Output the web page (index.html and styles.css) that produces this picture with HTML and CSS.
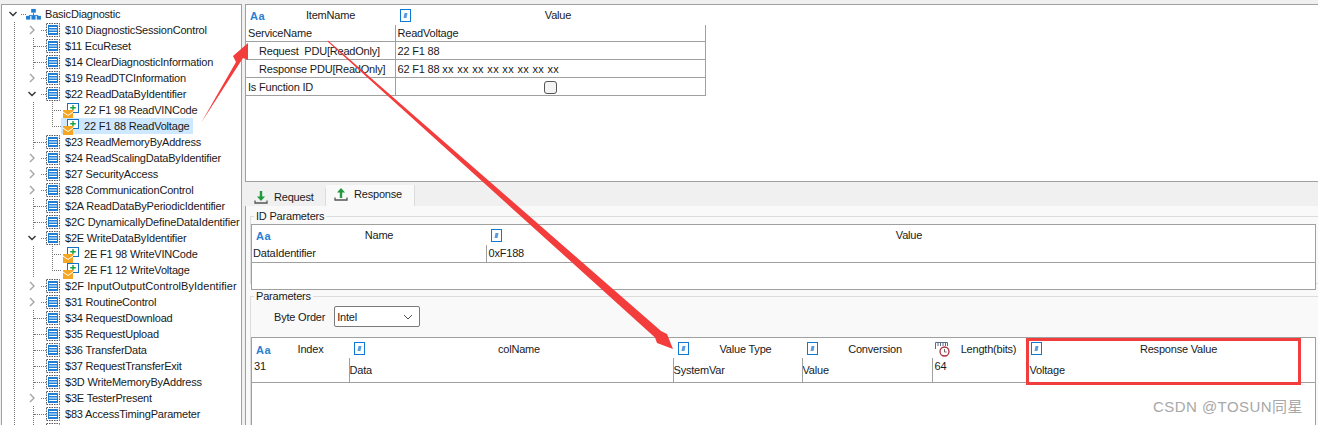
FILE: index.html
```html
<!DOCTYPE html>
<html>
<head>
<meta charset="utf-8">
<link rel="stylesheet" href="styles.css">
<title>BasicDiagnostic</title>
</head>
<body>
<svg width="0" height="0" class="defs">
  <defs>
    <symbol id="svc" viewBox="0 0 14 14">
      <rect x="0.5" y="0.5" width="13" height="13" fill="#fff" stroke="#555" stroke-dasharray="1.5 1"/>
      <rect x="2" y="2" width="10" height="10" fill="#1e7fd6"/>
      <path d="M3 4.500h8M3 7h8M3 9.500h8" stroke="#fff" stroke-width="1"/>
    </symbol>
    <symbol id="msg" viewBox="0 0 16 16">
      <rect x="4.500" y="0.500" width="11" height="9" fill="#fff" stroke="#1573c4"/>
      <path d="M10 2v5.500M7.200 4.700h5.600" stroke="#19a03c" stroke-width="1.400"/>
      <rect x="0" y="7" width="10" height="9" fill="#f5a623"/>
      <path d="M0 9l5 3.500L10 9" fill="none" stroke="#fff" stroke-width="1"/>
    </symbol>
    <symbol id="aa" viewBox="0 0 16 12">
      <text x="0" y="10.500" class="aa-text">Aa</text>
    </symbol>
    <symbol id="hash" viewBox="0 0 11 13">
      <rect x="0.500" y="0.500" width="10" height="12" fill="#fff" stroke="#0f78d4"/>
      <path d="M4.500 4h3l-1 5h-3z" fill="#5a9be0"/>
    </symbol>
    <symbol id="len" viewBox="0 0 16 16">
      <path d="M0.500 8V1.500h12V5" fill="none" stroke="#5b6b88"/>
      <path d="M3 2v3M5.500 2v3M8 2v3M10.500 2v3" stroke="#5b6b88"/>
      <circle cx="9.500" cy="10.500" r="4.500" fill="#fff" stroke="#a8323c" stroke-width="1.300"/>
      <path d="M9.500 8v3h2" fill="none" stroke="#666"/>
    </symbol>
    <symbol id="open" viewBox="0 0 10 10"><path d="M1.500 3l3.500 3.500L8.500 3" fill="none" stroke="#333" stroke-width="1.400"/></symbol>
    <symbol id="closed" viewBox="0 0 10 10"><path d="M3 1L7 5 3 9" fill="none" stroke="#a6a6a6" stroke-width="1.400"/></symbol>
  </defs>
</svg>
<div class="app">
  <aside class="tree">
    <div class="row root"><svg class="tw"><use href="#open"/></svg><span class="dots"></span>
      <svg class="ic-root" viewBox="0 0 16 14"><rect x="5.500" y="1" width="5" height="4" fill="#1e7fd6"/><path d="M8 5v3M3 8h10" stroke="#1e7fd6"/><rect x="0" y="8.500" width="4.500" height="4" fill="#1e7fd6"/><rect x="5.750" y="8.500" width="4.500" height="4" fill="#1e7fd6"/><rect x="11.500" y="8.500" width="4.500" height="4" fill="#1e7fd6"/></svg>
      <span class="lbl">BasicDiagnostic</span></div>
    <div class="row l1"><svg class="tw"><use href="#closed"/></svg><span class="dots"></span><svg class="ic"><use href="#svc"/></svg><span class="lbl">$10 DiagnosticSessionControl</span></div>
    <div class="row l1"><span class="tw none"></span><span class="dots"></span><svg class="ic"><use href="#svc"/></svg><span class="lbl">$11 EcuReset</span></div>
    <div class="row l1"><span class="tw none"></span><span class="dots"></span><svg class="ic"><use href="#svc"/></svg><span class="lbl">$14 ClearDiagnosticInformation</span></div>
    <div class="row l1"><svg class="tw"><use href="#closed"/></svg><span class="dots"></span><svg class="ic"><use href="#svc"/></svg><span class="lbl">$19 ReadDTCInformation</span></div>
    <div class="row l1"><svg class="tw"><use href="#open"/></svg><span class="dots"></span><svg class="ic"><use href="#svc"/></svg><span class="lbl">$22 ReadDataByIdentifier</span></div>
    <div class="row l2"><div class="item"><svg class="ic2"><use href="#msg"/></svg><span class="lbl">22 F1 98 ReadVINCode</span></div></div>
    <div class="row l2 last"><div class="item sel"><svg class="ic2"><use href="#msg"/></svg><span class="lbl">22 F1 88 ReadVoltage</span></div></div>
    <div class="row l1"><span class="tw none"></span><span class="dots"></span><svg class="ic"><use href="#svc"/></svg><span class="lbl">$23 ReadMemoryByAddress</span></div>
    <div class="row l1"><svg class="tw"><use href="#closed"/></svg><span class="dots"></span><svg class="ic"><use href="#svc"/></svg><span class="lbl">$24 ReadScalingDataByIdentifier</span></div>
    <div class="row l1"><svg class="tw"><use href="#closed"/></svg><span class="dots"></span><svg class="ic"><use href="#svc"/></svg><span class="lbl">$27 SecurityAccess</span></div>
    <div class="row l1"><svg class="tw"><use href="#closed"/></svg><span class="dots"></span><svg class="ic"><use href="#svc"/></svg><span class="lbl">$28 CommunicationControl</span></div>
    <div class="row l1"><span class="tw none"></span><span class="dots"></span><svg class="ic"><use href="#svc"/></svg><span class="lbl">$2A ReadDataByPeriodicIdentifier</span></div>
    <div class="row l1"><span class="tw none"></span><span class="dots"></span><svg class="ic"><use href="#svc"/></svg><span class="lbl mid">$2C DynamicallyDefineDataIdentifier</span></div>
    <div class="row l1"><svg class="tw"><use href="#open"/></svg><span class="dots"></span><svg class="ic"><use href="#svc"/></svg><span class="lbl">$2E WriteDataByIdentifier</span></div>
    <div class="row l2"><div class="item"><svg class="ic2"><use href="#msg"/></svg><span class="lbl">2E F1 98 WriteVINCode</span></div></div>
    <div class="row l2 last"><div class="item"><svg class="ic2"><use href="#msg"/></svg><span class="lbl">2E F1 12 WriteVoltage</span></div></div>
    <div class="row l1"><svg class="tw"><use href="#closed"/></svg><span class="dots"></span><svg class="ic"><use href="#svc"/></svg><span class="lbl wide">$2F InputOutputControlByIdentifier</span></div>
    <div class="row l1"><svg class="tw"><use href="#closed"/></svg><span class="dots"></span><svg class="ic"><use href="#svc"/></svg><span class="lbl">$31 RoutineControl</span></div>
    <div class="row l1"><span class="tw none"></span><span class="dots"></span><svg class="ic"><use href="#svc"/></svg><span class="lbl">$34 RequestDownload</span></div>
    <div class="row l1"><span class="tw none"></span><span class="dots"></span><svg class="ic"><use href="#svc"/></svg><span class="lbl">$35 RequestUpload</span></div>
    <div class="row l1"><span class="tw none"></span><span class="dots"></span><svg class="ic"><use href="#svc"/></svg><span class="lbl">$36 TransferData</span></div>
    <div class="row l1"><span class="tw none"></span><span class="dots"></span><svg class="ic"><use href="#svc"/></svg><span class="lbl">$37 RequestTransferExit</span></div>
    <div class="row l1"><span class="tw none"></span><span class="dots"></span><svg class="ic"><use href="#svc"/></svg><span class="lbl">$3D WriteMemoryByAddress</span></div>
    <div class="row l1"><svg class="tw"><use href="#closed"/></svg><span class="dots"></span><svg class="ic"><use href="#svc"/></svg><span class="lbl">$3E TesterPresent</span></div>
    <div class="row l1"><span class="tw none"></span><span class="dots"></span><svg class="ic"><use href="#svc"/></svg><span class="lbl">$83 AccessTimingParameter</span></div>
    <div class="row l1"><span class="tw none"></span><span class="dots"></span><svg class="ic"><use href="#svc"/></svg></div>
  </aside>

  <main class="right">
    <section class="top-grid">
      <table class="grid g1">
        <colgroup><col class="c1a"><col class="c1b"></colgroup>
        <thead><tr><th><div class="hd"><svg class="i-aa"><use href="#aa"/></svg><span class="ttl">ItemName</span></div></th><th><div class="hd"><svg class="i-h"><use href="#hash"/></svg><span class="ttl">Value</span></div></th></tr></thead>
        <tbody>
          <tr><td>ServiceName</td><td>ReadVoltage</td></tr>
          <tr><td class="ind">Request&nbsp; PDU[ReadOnly]</td><td>22 F1 88</td></tr>
          <tr><td class="ind">Response PDU[ReadOnly]</td><td>62 F1 88 <span class="xx">xx xx xx xx xx xx xx xx</span></td></tr>
          <tr><td>Is Function ID</td><td class="chk"><span class="box"></span></td></tr>
        </tbody>
      </table>
    </section>

    <div class="tabs">
      <div class="tab"><svg class="i-tab" viewBox="0 0 14 14"><path d="M7 1v7" stroke="#1f9a3c" stroke-width="2.400"/><path d="M3 6.500h8L7 11z" fill="#1f9a3c"/><path d="M1 10.500v2.500h12v-2.500" fill="none" stroke="#555" stroke-width="1.300"/></svg>Request</div>
      <div class="tab active"><svg class="i-tab" viewBox="0 0 14 14"><path d="M7 11V4" stroke="#1f9a3c" stroke-width="2.400"/><path d="M3 5.500h8L7 1z" fill="#1f9a3c"/><path d="M1 10.500v2.500h12v-2.500" fill="none" stroke="#555" stroke-width="1.300"/></svg>Response</div>
    </div>

    <section class="pane">
      <fieldset class="grp id-grp">
        <legend>ID Parameters</legend>
        <div class="gridbox id-box">
          <table class="grid g2">
            <colgroup><col class="c2a"><col class="c2b"></colgroup>
            <thead><tr><th><div class="hd"><svg class="i-aa"><use href="#aa"/></svg><span class="ttl">Name</span></div></th><th><div class="hd"><svg class="i-h"><use href="#hash"/></svg><span class="ttl">Value</span></div></th></tr></thead>
            <tbody><tr><td>DataIdentifier</td><td class="val">0xF188</td></tr></tbody>
          </table>
        </div>
      </fieldset>
      <fieldset class="grp par-grp">
        <legend>Parameters</legend>
        <div class="order"><span>Byte Order</span><div class="select">Intel<svg class="chev" viewBox="0 0 10 6"><path d="M1 1l4 4 4-4" fill="none" stroke="#555"/></svg></div></div>
        <div class="gridbox par-box">
          <table class="grid g3">
            <colgroup><col class="c3a"><col class="c3b"><col class="c3c"><col class="c3d"><col class="c3e"><col class="c3f"></colgroup>
            <thead><tr>
              <th><div class="hd"><svg class="i-aa"><use href="#aa"/></svg><span class="ttl">Index</span></div></th>
              <th><div class="hd"><svg class="i-h"><use href="#hash"/></svg><span class="ttl">colName</span></div></th>
              <th><div class="hd"><svg class="i-h"><use href="#hash"/></svg><span class="ttl">Value Type</span></div></th>
              <th><div class="hd"><svg class="i-h"><use href="#hash"/></svg><span class="ttl">Conversion</span></div></th>
              <th><div class="hd"><svg class="i-len"><use href="#len"/></svg><span class="ttl">Length(bits)</span></div></th>
              <th><div class="hd"><svg class="i-h"><use href="#hash"/></svg><span class="ttl">Response Value</span></div></th>
            </tr></thead>
            <tbody><tr><td class="up">31</td><td class="tight">Data</td><td class="tight">SystemVar</td><td class="tight">Value</td><td class="up">64</td><td class="pad">Voltage</td></tr></tbody>
          </table>
        </div>
      </fieldset>
    </section>
  </main>
</div>

<svg class="overlay" width="1318" height="425" viewBox="0 0 1318 425">
  <rect x="1027.500" y="339.500" width="272" height="44" fill="none" stroke="#f33c3c" stroke-width="3"/>
  <path d="M201 123 L236 62 L233 56 L248 43 L248 60 L243 58 Z" fill="#f33c3c"/>
  <path d="M328 40.500 L661 331 L667 334 L673 349 L657 343 L655 337.500 L327.500 41.500 Z" fill="#f33c3c"/>
</svg>
<div class="mark">CSDN @TOSUN同星</div>
</body>
</html>
```
FILE: styles.css
```css
* { box-sizing: border-box; }
html, body { margin: 0; padding: 0; }
body {
  width: 1318px; height: 425px; overflow: hidden; position: relative;
  background: #f0f0f0;
  font: 11px/16px "Liberation Sans", "Noto Sans CJK SC", sans-serif;
  letter-spacing: -0.2px;
  color: #1a1a1a;
}
.defs { position: absolute; }
.aa-text { font: bold 11px "Liberation Sans", sans-serif; fill: #2a7fd4; letter-spacing: 0.5px; }

.app { display: flex; height: 425px; padding-top: 4px; }
.tree {
  width: 241px; margin-left: 1px; flex: none;
  background: repeating-linear-gradient(to bottom, #777 0 1px, transparent 1px 2px) 12px 17px / 1px 100% no-repeat #fff;
  border: 1px solid #a0a0a0; border-bottom: 0; padding-top: 1px; overflow: hidden;
}
.row {
  display: flex; align-items: center; height: 16px; white-space: nowrap;
  --vline: repeating-linear-gradient(to bottom, #777 0 1px, transparent 1px 2px);
  --hline: repeating-linear-gradient(to right, #777 0 1px, transparent 1px 2px);
}
.root { padding-left: 6px; }
.tw { width: 10px; height: 10px; flex: none; display: block; background: #fff; outline: 3px solid #fff; }
.tw.none { background: transparent; outline: 0; }
.root .tw { background: transparent; outline: 0; }
.dots { width: 5px; flex: none; border-top: 1px dotted #777; margin-left: 3px; }
.ic-root { width: 15px; height: 13px; margin-right: 2px; flex: none; }
.l1 {
  padding-left: 25px;
  background: var(--vline) 31px 0 / 1px 100% no-repeat;
}
.l1 .dots { margin-left: 4px; }
.l1 .tw.none + .dots { margin-left: -3px; width: 12px; }
.l1 .ic { width: 14px; height: 14px; margin-right: 3px; flex: none; }
.l2 {
  padding-left: 59px;
  background:
    var(--vline) 31px 0 / 1px 100% no-repeat,
    var(--vline) 50px 0 / 1px 100% no-repeat,
    var(--hline) 50px 8px / 10px 1px no-repeat;
}
.l2.last {
  background:
    var(--vline) 31px 0 / 1px 100% no-repeat,
    var(--vline) 50px 0 / 1px 9px no-repeat,
    var(--hline) 50px 8px / 10px 1px no-repeat;
}
.item { display: flex; align-items: flex-start; height: 16px; padding-left: 2px; padding-right: 2px; }
.sel { background: #cde8ff; }
.ic2 { width: 16px; height: 16px; margin-top: 1px; margin-right: 3px; flex: none; overflow: visible; }
.lbl { padding: 0 2px; height: 16px; line-height: 16px; }
.lbl.mid { letter-spacing: -0.15px; }
.lbl.wide { letter-spacing: 0.05px; }

.right { flex: 1; margin-left: 3px; min-width: 0; display: flex; flex-direction: column; }
.top-grid { height: 178px; background: #fff; border: 1px solid #a0a0a0; border-right: 0; flex: none; }

.grid { border-collapse: collapse; table-layout: fixed; background: #fff; }
.grid th { font-weight: normal; padding: 0; text-align: center; height: 20px; }
.grid td { padding: 0 1px 0 1px; border-right: 1px solid #a0a0a0; border-bottom: 1px solid #a0a0a0; height: 18px; white-space: nowrap; overflow: hidden; }
.hd { display: flex; align-items: center; height: 20px; }
.ttl { flex: 1; text-align: center; }
.i-aa { width: 16px; height: 12px; margin-left: 4px; flex: none; }
.i-h { width: 11px; height: 13px; margin-left: 5px; flex: none; }
.i-len { width: 16px; height: 16px; margin-left: 3px; flex: none; }

.g1 { width: 459px; }
.c1a { width: 149px; } .c1b { width: 310px; }
.g1 td { padding-left: 2px; }
.g1 td.ind { padding-left: 13px; }
.g1 tbody tr:first-child td { height: 16px; }
.xx { letter-spacing: 0.33px; }
.chk { text-align: center; }
.box { display: inline-block; width: 13px; height: 13px; border: 1px solid #555; border-radius: 3px; background: #f4f4f4; vertical-align: middle; }

.tabs { display: flex; height: 24px; padding: 3px 0 0 1px; flex: none; align-items: flex-end; }
.tab { height: 18px; width: 80px; display: flex; align-items: center; gap: 6px; padding-left: 8px; background: #f0f0f0; border-right: 1px solid #dcdcdc; }
.i-tab { width: 14px; height: 14px; flex: none; }
.tab.active { height: 21px; width: 89px; background: #f9f9f9; padding-bottom: 3px; }

.pane { flex: 1; background: #f9f9f9; border-left: 1px solid #a0a0a0; padding: 0 0 0 4px; min-height: 0; }
.grp { margin: 0; border: 1px solid #dcdcdc; border-right: 0; padding: 0; min-width: 0; }
.grp legend { padding: 0 2px; margin-left: 3px; line-height: 13px; }
.id-grp { margin-top: 4px; height: 74px; }
.gridbox { background: #fff; border: 1px solid #a0a0a0; margin-right: 2px; overflow: hidden; }
.id-box { height: 66px; margin-top: 1px; }
.g2 { width: 1064px; }
.c2a { width: 234px; } .c2b { width: 830px; }
.g2 td { height: 17px; }
.g2 td.val { padding-left: 2px; }
.par-grp { height: 140px; margin-top: 6px; }
.order { display: flex; align-items: center; height: 21px; margin: 3px 0 10px 23px; gap: 9px; }
.select { width: 86px; height: 21px; border: 1px solid #7a7a7a; border-radius: 2px; background: #fff; padding-left: 2px; line-height: 18px; display: flex; justify-content: space-between; align-items: center; padding-right: 6px; }
.chev { width: 10px; height: 6px; }
.par-box { height: 100px; }
.g3 { width: 1063px; }
.g3 th .hd { padding-top: 1px; }
.c3a { width: 97px; } .c3b { width: 324px; } .c3c { width: 129px; } .c3d { width: 130px; } .c3e { width: 94px; } .c3f { width: 289px; }
.g3 td { height: 24px; vertical-align: middle; }
.g3 td.up { vertical-align: top; padding-left: 2px; }
.g3 td.tight { padding-left: 0; }
.g3 td.pad { padding-left: 3px; }

.overlay { position: absolute; left: 0; top: 0; pointer-events: none; }
.mark { position: absolute; right: 15px; top: 399px; font: 15px/16px "Liberation Sans", "Noto Sans CJK SC", sans-serif; color: #a8a8a8; letter-spacing: 0.45px; }
```
